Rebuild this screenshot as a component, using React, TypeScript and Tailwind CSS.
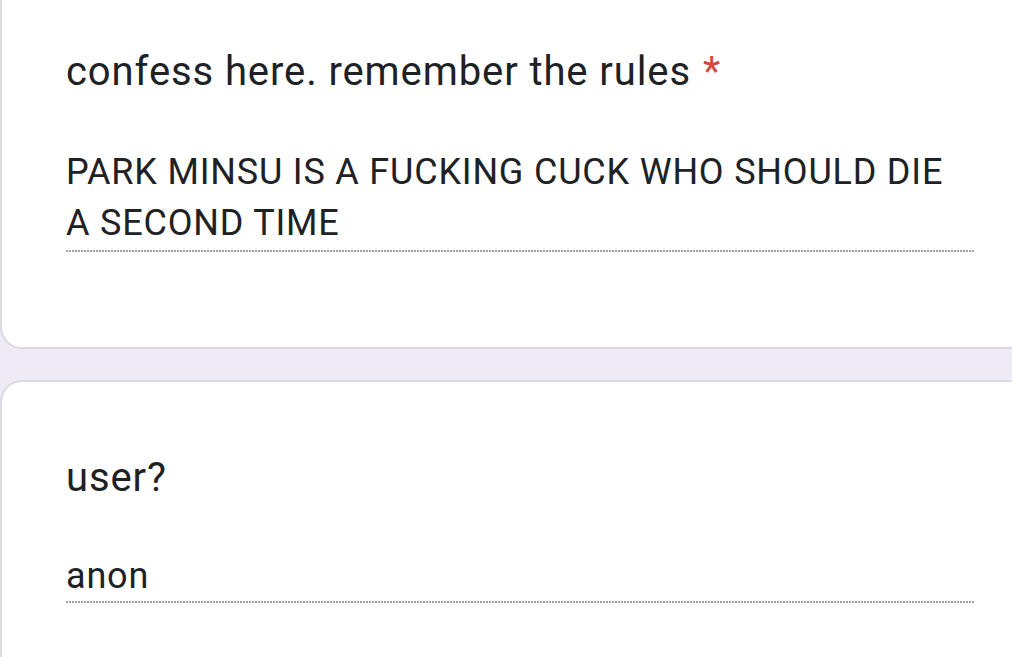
import React from "react";

const Dotted = ({ className = "" }: { className?: string }) => (
  <div
    className={`h-[2px] w-[908px] bg-[repeating-linear-gradient(90deg,#a0a0a0_0px,#a0a0a0_2px,transparent_2px,transparent_3px)] ${className}`}
  />
);

export default function App() {
  return (
    <div
      className="w-[1012px] h-[657px] overflow-hidden bg-[#eeebf6] flex flex-col"
      style={{ fontFamily: "Roboto, 'Noto Sans', Arial, sans-serif" }}
    >
      <div className="bg-white border-l-2 border-b-2 border-[#dcdae0] rounded-bl-[22px] h-[349px] shrink-0 pl-[64px] pt-[48px] text-[#202124]">
        <div className="text-[40px] leading-[48px] tracking-[0.9px] flex whitespace-nowrap">
          <span>confess here. remember the rules</span>
          <span className="text-[#d0493c] ml-[12px]">*</span>
        </div>
        <div className="mt-[51px] text-[36px] leading-[51px] tracking-[0.8px] whitespace-nowrap">
          PARK MINSU IS A FUCKING CUCK WHO SHOULD DIE
          <br />A SECOND TIME
        </div>
        <Dotted className="mt-[1px]" />
      </div>
      <div className="mt-[31px] bg-white border-l-2 border-t-2 border-[#dcdae0] rounded-tl-[22px] flex-1 pl-[64px] pt-[72px] text-[#202124]">
        <div className="text-[40px] leading-[48px] tracking-[0.9px]">user?</div>
        <div className="mt-[49px] text-[36px] leading-[51px] tracking-[0.8px]">anon</div>
        <Dotted className="-mt-[1px]" />
      </div>
    </div>
  );
}
